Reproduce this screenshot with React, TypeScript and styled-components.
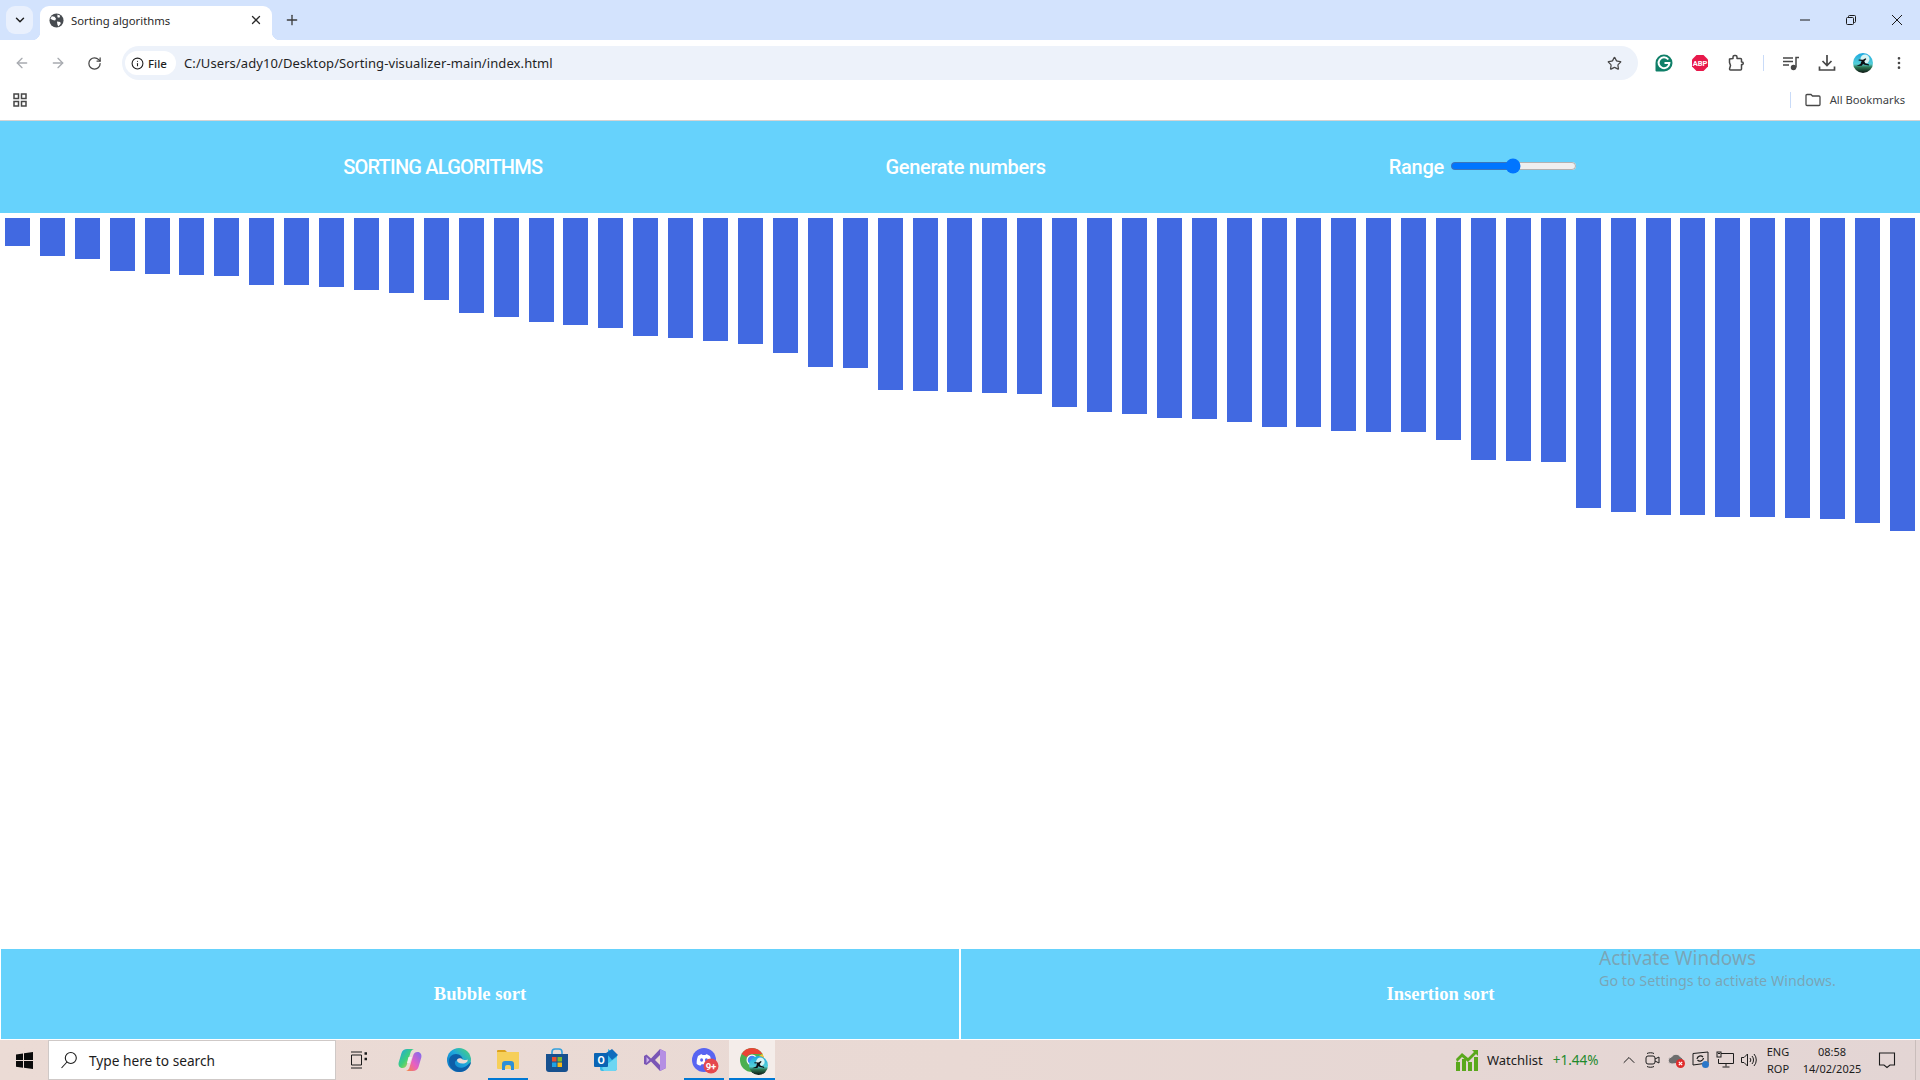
import React from 'react';
import styled, { createGlobalStyle } from 'styled-components';
import { ArrowLeft, ArrowRight, ChevronDown, ChevronUp, Info, MoreVertical, Plus, RotateCw, Star, X } from 'lucide-react';

const barHeights = [
  28, 38, 41, 53, 56, 57, 58, 67, 67, 69, 72, 75, 82, 95, 99, 104, 107, 110, 118, 120,
  123, 126, 135, 149, 150, 172, 173, 174, 175, 176, 189, 194, 196, 200, 201, 204, 209, 209,
  213, 214, 214, 222, 242, 243, 244, 290, 294, 297, 297, 299, 299, 300, 301, 305, 313,
];

const uiFont = '"Noto Sans", "Open Sans", sans-serif';

const GlobalStyle = createGlobalStyle`
  html, body {
    margin: 0;
    height: 100%;
    overflow: hidden;
    background: #fff;
  }
  #root {
    height: 100%;
  }
`;

const Page = styled.div`
  display: flex;
  flex-direction: column;
  height: 1080px;
  width: 1920px;
  position: relative;
`;

const TabStrip = styled.div`
  display: flex;
  align-items: flex-end;
  height: 40px;
  background: #d3e3fd;
  padding-left: 6px;
  flex-shrink: 0;
`;

const TabSearch = styled.div`
  width: 27px;
  height: 28px;
  margin-bottom: 6px;
  border-radius: 9px;
  background: #e9f0fd;
  display: flex;
  align-items: center;
  justify-content: center;
  color: #1f1f1f;
`;

const Tab = styled.div`
  position: relative;
  width: 232px;
  height: 34px;
  margin-left: 7px;
  box-sizing: border-box;
  padding: 0 9px 6px 9px;
  background: #fff;
  border-radius: 9px 9px 0 0;
  display: flex;
  align-items: center;
  gap: 7px;
  font: 11.3px ${uiFont};
  color: #2a2a2a;

  &::before,
  &::after {
    content: '';
    position: absolute;
    bottom: 0;
    width: 8px;
    height: 8px;
  }
  &::before {
    left: -8px;
    background: radial-gradient(circle at 0 0, #d3e3fd 8px, #fff 8.5px);
  }
  &::after {
    right: -8px;
    background: radial-gradient(circle at 100% 0, #d3e3fd 8px, #fff 8.5px);
  }
`;

const TabTitle = styled.span`
  flex: 1;
`;

const NewTab = styled.div`
  display: flex;
  align-items: center;
  justify-content: center;
  width: 20px;
  height: 34px;
  box-sizing: border-box;
  padding-bottom: 6px;
  margin-left: 10px;
  color: #3c3c3c;
`;

const WindowControls = styled.div`
  display: flex;
  margin-left: auto;
  height: 40px;
  align-items: center;
`;

const WindowButton = styled.div`
  width: 46px;
  display: flex;
  align-items: center;
  justify-content: center;
  color: #1a1a1a;
`;

const Toolbar = styled.div`
  display: flex;
  align-items: center;
  height: 40px;
  background: #fff;
  border-radius: 10px 10px 0 0;
  flex-shrink: 0;
  padding-left: 4px;
`;

const NavButton = styled.div<{ $muted?: boolean }>`
  width: 36px;
  margin-top: 6px;
  display: flex;
  justify-content: center;
  color: ${(p) => (p.$muted ? '#a8abb0' : '#474747')};
`;

const AddressBar = styled.div`
  display: flex;
  align-items: center;
  width: 1516px;
  height: 34px;
  margin-left: 10px;
  margin-top: 6px;
  border-radius: 17px;
  background: #edf2fa;
  padding: 0 16px 0 3px;
  box-sizing: border-box;
`;

const FileChip = styled.div`
  display: flex;
  align-items: center;
  gap: 4px;
  height: 24px;
  width: 51px;
  padding-left: 6px;
  box-sizing: border-box;
  background: #fff;
  border-radius: 12px;
  font: 500 11.5px ${uiFont};
  color: #1f1f1f;
`;

const Url = styled.span`
  flex: 1;
  margin-left: 8px;
  font: 13px ${uiFont};
  letter-spacing: 0.09px;
  color: #1f1f1f;
`;

const ToolbarIcons = styled.div`
  display: flex;
  align-items: center;
  margin-left: 8px;
  margin-top: 6px;
`;

const ToolbarIcon = styled.div<{ $w?: number }>`
  width: ${(p) => p.$w ?? 36}px;
  display: flex;
  justify-content: center;
  color: #474747;
`;

const BarDivider = styled.div`
  width: 1px;
  height: 16px;
  background: #c9dbf8;
`;

const ToolbarDivider = styled(BarDivider)`
  margin-left: 9px;
`;

const BookmarksBar = styled.div`
  display: flex;
  align-items: center;
  height: 40px;
  padding: 0 15px 0 13px;
  background: #fff;
  border-bottom: 1px solid #d4d4d4;
  flex-shrink: 0;
  font: 11.2px ${uiFont};
  color: #3c4043;
`;

const AllBookmarks = styled.div`
  margin-left: auto;
  display: flex;
  align-items: center;
  gap: 14px;
`;

const BookmarkLabel = styled.span`
  margin-left: -5px;
  margin-top: -2px;
`;

const Header = styled.header`
  display: flex;
  align-items: center;
  justify-content: space-evenly;
  height: 92px;
  background: #66d2fc;
  color: #fff;
  flex-shrink: 0;
  font: 500 20px Roboto, sans-serif;
  letter-spacing: -0.3px;
`;

const HeaderTitle = styled.span`
  letter-spacing: -0.78px;
`;

const RangeGroup = styled.label`
  display: flex;
  align-items: center;
  gap: 4px;
`;

const RangeInput = styled.input`
  width: 127px;
  margin: 0 0 2px 2px;
  accent-color: #0075ff;
`;

const Bars = styled.main`
  flex: 1;
  display: flex;
  align-items: flex-start;
  justify-content: space-around;
  padding-top: 5px;
`;

const Bar = styled.div`
  width: 25px;
  background: #4169e1;
`;

const Footer = styled.footer`
  display: grid;
  grid-template-columns: 958px 1fr;
  gap: 2px;
  height: 90px;
  padding-left: 1px;
  margin-bottom: 1px;
  flex-shrink: 0;
`;

const SortButton = styled.button`
  border: none;
  background: #66d2fc;
  color: #fff;
  font: bold 18.6px "Liberation Serif", serif;
  padding: 0;
`;

const Watermark = styled.div`
  position: absolute;
  left: 1599px;
  top: 944px;
  font-family: ${uiFont};
  color: rgba(135, 135, 135, 0.6);
  pointer-events: none;
`;

const WatermarkTitle = styled.div`
  font-size: 19px;
  line-height: 28px;
`;

const WatermarkText = styled.div`
  font-size: 14.3px;
  line-height: 20px;
  margin-top: -1px;
`;

const Taskbar = styled.div`
  display: flex;
  align-items: stretch;
  height: 40px;
  flex-shrink: 0;
  background: linear-gradient(90deg, #ebdbd5 0%, #e9d9d4 50%, #e3d5d4 100%);
  font-family: ${uiFont};
  color: #1c1c1c;
`;

const StartButton = styled.div`
  width: 48px;
  display: flex;
  align-items: center;
  justify-content: center;
`;

const SearchBox = styled.div`
  width: 288px;
  box-sizing: border-box;
  display: flex;
  align-items: center;
  gap: 11px;
  padding-left: 11px;
  background: #fff;
  border: 1px solid #cfc9c7;
  font-size: 13.7px;
`;

const TaskSlot = styled.div<{ $open?: boolean; $focused?: boolean }>`
  position: relative;
  width: ${(p) => (p.$focused ? 46 : 49)}px;
  margin-left: ${(p) => (p.$focused ? 1 : 0)}px;
  display: flex;
  align-items: center;
  justify-content: center;
  background: ${(p) => (p.$focused ? '#f4edea' : 'transparent')};

  &::after {
    content: ${(p) => (p.$open || p.$focused ? "''" : 'none')};
    position: absolute;
    bottom: 0;
    left: ${(p) => (p.$focused ? 0 : 5)}px;
    width: ${(p) => (p.$focused ? 46 : 40)}px;
    height: 2px;
    background: #0078d4;
  }
`;

const TaskViewSlot = styled(TaskSlot)`
  padding-right: 3px;
  box-sizing: border-box;
`;

const Tray = styled.div`
  margin-left: auto;
  display: flex;
  align-items: stretch;
`;

const Watchlist = styled.div`
  width: 161px;
  display: flex;
  align-items: center;
  font-size: 13px;
`;

const WatchlistLabel = styled.span`
  margin-left: 9px;
`;

const WatchlistValue = styled.span`
  margin-left: 10px;
  font-size: 13.5px;
  color: #1f8a2c;
`;

const TrayIcon = styled.div`
  width: 24px;
  display: flex;
  align-items: center;
  justify-content: center;
`;

const TrayText = styled.div<{ $w: number }>`
  width: ${(p) => p.$w}px;
  display: flex;
  flex-direction: column;
  align-items: center;
  justify-content: center;
  font-size: 11px;
  line-height: 17px;
  white-space: nowrap;
`;

const NotifyButton = styled.div`
  width: 36px;
  display: flex;
  align-items: center;
  justify-content: center;
`;

const ShowDesktop = styled.div`
  width: 15px;
  box-sizing: border-box;
  padding-left: 10px;

  &::before {
    content: '';
    display: block;
    width: 1px;
    height: 100%;
    background: #c9bdbb;
  }
`;

const Globe = () => (
  <svg width="15" height="15" viewBox="0 0 16 16">
    <circle cx="8" cy="8" r="7.500" fill="#474b50" />
    <path d="M3 3.500l3 .5 1.500 2-1 2-2.500-.5L1.500 6zM9 1.500l3 1.500-1 2-2-.5zM8.500 9l3.500.5.500 2-2.500 3-1-2z" fill="#fff" />
  </svg>
);

const AppsGrid = () => (
  <svg width="14" height="14" viewBox="0 0 14 14" fill="none" stroke="#474747" strokeWidth="1.500">
    <rect x="1" y="1" width="4.500" height="4.500" />
    <rect x="8.500" y="1" width="4.500" height="4.500" />
    <rect x="1" y="8.500" width="4.500" height="4.500" />
    <rect x="8.500" y="8.500" width="4.500" height="4.500" />
  </svg>
);

const Minimize = () => (
  <svg width="10" height="10" viewBox="0 0 10 10"><path d="M0 5h10" stroke="currentColor" /></svg>
);

const Restore = () => (
  <svg width="10" height="10" viewBox="0 0 10 10" fill="none" stroke="currentColor">
    <rect x=".5" y="2.500" width="7" height="7" rx="1" />
    <path d="M2.500 2.500v-1a1 1 0 0 1 1-1h5a1 1 0 0 1 1 1v5a1 1 0 0 1-1 1h-1" />
  </svg>
);

const CloseGlyph = () => (
  <svg width="10" height="10" viewBox="0 0 10 10"><path d="M0 0l10 10M10 0L0 10" stroke="currentColor" /></svg>
);

const Grammarly = () => (
  <svg width="18" height="18" viewBox="0 0 18 18">
    <path d="M9 .500a8.500 8.500 0 1 1 0 17H1.500a1 1 0 0 1-1-1V9A8.500 8.500 0 0 1 9 .500z" fill="#0f7f68" />
    <path d="M13.300 5.500A5.400 5.400 0 1 0 14.400 9H9.500" fill="none" stroke="#fff" strokeWidth="2" />
  </svg>
);

const AdblockPlus = () => (
  <svg width="18" height="18" viewBox="0 0 18 18">
    <path d="M5.500 1h7L17 5.500v7L12.500 17h-7L1 12.500v-7z" fill="#e8194b" />
    <text x="9" y="11.800" textAnchor="middle" fontFamily="Roboto, sans-serif" fontWeight="700" fontSize="7.500" fill="#fff">ABP</text>
  </svg>
);

const ExtensionPuzzle = () => (
  <svg width="18" height="18" viewBox="0 0 18 18" fill="none" stroke="#474747" strokeWidth="1.500" strokeLinejoin="round">
    <path d="M2.500 5l3.500-.5V3a1.500 1.500 0 0 1 1.500-1.500h1A1.500 1.500 0 0 1 10 3v1.500h3.500a1 1 0 0 1 1 1V8h.5a1 1 0 0 1 0 2.500h-.5V15a1 1 0 0 1-1 1H3.500a1 1 0 0 1-1-1l1-3.500-1-3z" />
  </svg>
);

const MediaQueue = () => (
  <svg width="18" height="18" viewBox="0 0 18 18" fill="none" stroke="#474747" strokeWidth="1.500">
    <path d="M1 4h10M1 7.500h10M1 11h6" />
    <path d="M14 13.500V3.500h3" />
    <circle cx="11.500" cy="13.500" r="2" fill="#474747" />
  </svg>
);

const DownloadTray = () => (
  <svg width="18" height="18" viewBox="0 0 18 18" fill="none" stroke="#474747" strokeWidth="1.700">
    <path d="M9 1v10M4.500 7L9 11.500 13.500 7" />
    <path d="M1.500 12.500V16h15v-3.500" />
  </svg>
);

const Avatar = ({ size = 20 }: { size?: number }) => (
  <svg width={size} height={size} viewBox="0 0 20 20">
    <defs>
      <linearGradient id="sky" x1="0" y1="0" x2="0" y2="1">
        <stop offset="0" stopColor="#1aa7e0" />
        <stop offset=".55" stopColor="#56d0d8" />
        <stop offset=".7" stopColor="#2e7a55" />
        <stop offset="1" stopColor="#0d1512" />
      </linearGradient>
    </defs>
    <circle cx="10" cy="10" r="10" fill="url(#sky)" />
    <circle cx="12" cy="6" r="4.500" fill="#d8f4f4" />
    <path d="M3.500 13l4-2 1-3-3-.5.300-1 4.200.3 2.500-1.500.8.800-2 2.200 1 2 3.500 1 .2 1.200-4.500-.8-1.500-.8-1.200 1.800z" fill="#0c0f12" />
  </svg>
);

const FolderOutline = () => (
  <svg width="16" height="14" viewBox="0 0 16 14" fill="none" stroke="#474747" strokeWidth="1.300">
    <path d="M1 2.500a1 1 0 0 1 1-1h4l1.500 1.500H14a1 1 0 0 1 1 1v7.500a1 1 0 0 1-1 1H2a1 1 0 0 1-1-1z" />
  </svg>
);

const WindowsLogo = () => (
  <svg width="17" height="17" viewBox="0 0 17 17" fill="#0a0a0a">
    <path d="M0 2.400l7-1v6.700H0zM8 1.300L17 0v8.100H8zM0 9h7v6.700l-7-1zM8 9h9v8l-9-1.300z" />
  </svg>
);

const SearchGlyph = () => (
  <svg width="18" height="18" viewBox="0 0 18 18" fill="none" stroke="#1c1c1c" strokeWidth="1.100">
    <circle cx="10.800" cy="7" r="5.500" />
    <path d="M7 11L1.500 17" />
  </svg>
);

const TaskView = () => (
  <svg width="18" height="18" viewBox="0 0 18 18" fill="none" stroke="#1c1c1c" strokeWidth="1">
    <path d="M1 1h11M1 17h11" />
    <path d="M1.500 4h10v10h-10z" />
    <path d="M14.500 2.500h2.500M14.500 8h2.500" strokeWidth="2.500" />
  </svg>
);

const Copilot = () => (
  <svg width="24" height="24" viewBox="0 0 24 24">
    <defs>
      <linearGradient id="copA" x1="0" y1="0" x2="1" y2="1">
        <stop offset="0" stopColor="#1fa5e6" />
        <stop offset=".5" stopColor="#3ccf7d" />
        <stop offset="1" stopColor="#f8d22f" />
      </linearGradient>
      <linearGradient id="copB" x1="1" y1="0" x2="0" y2="1">
        <stop offset="0" stopColor="#7a6cf0" />
        <stop offset=".55" stopColor="#e85fc2" />
        <stop offset="1" stopColor="#f58a3c" />
      </linearGradient>
    </defs>
    <path d="M9 1h7c-2 .5-3 2-3.600 4L9 16c-.7 2.500-2 4-4.500 4C1.500 20 0 17.500 .7 14.500L3.500 5C4.300 2.500 6.500 1 9 1z" fill="url(#copA)" />
    <path d="M15 23H8c2-.5 3-2 3.600-4L15 8c.7-2.500 2-4 4.500-4 3 0 4.500 2.500 3.800 5.500L20.500 19c-.8 2.500-3 4-5.500 4z" fill="url(#copB)" />
    <path d="M10.500 9h3.500l-2.500 6H9z" fill="#f7edf3" />
  </svg>
);

const Edge = () => (
  <svg width="24" height="24" viewBox="0 0 24 24">
    <defs>
      <linearGradient id="edgeA" x1="0" y1="1" x2="1" y2="0">
        <stop offset="0" stopColor="#0c6fc0" />
        <stop offset=".55" stopColor="#1ea7dd" />
        <stop offset="1" stopColor="#4fd86d" />
      </linearGradient>
    </defs>
    <circle cx="12" cy="12" r="12" fill="url(#edgeA)" />
    <path d="M24 14c-1 6-6 10-11 10-7 0-11-5-11-11 0-4 3-7 7-7 4 0 7 3 6.500 6H11c-2.500 0-3.500 2-3 4 .8 3 4.500 4.500 8 3.500 3-.8 5-3 8-5.500z" fill="#0d5ea8" />
    <path d="M14.500 10.500c1 1.500 4 2 6 1 .8 2-1.500 4-5 4-3.500 0-5.500-1.500-5.500-3.500 0-1 1.500-2.500 4.500-1.500z" fill="#ebdbd5" />
  </svg>
);

const FileExplorer = () => (
  <svg width="24" height="24" viewBox="0 0 24 24">
    <path d="M1 3a1 1 0 0 1 1-1h7l2 2h-10z" fill="#dca21e" />
    <path d="M1 4h22v16a1 1 0 0 1-1 1H2a1 1 0 0 1-1-1z" fill="#f6cf5a" />
    <path d="M6 22v-6a3 3 0 0 1 3-3h6a3 3 0 0 1 3 3v6h-3v-3a2 2 0 0 0-2-2h-2a2 2 0 0 0-2 2v3z" fill="#2c8fd8" />
  </svg>
);

const MicrosoftStore = () => (
  <svg width="24" height="24" viewBox="0 0 24 24">
    <path d="M7 7V4a3 3 0 0 1 3-3h4a3 3 0 0 1 3 3v3" fill="none" stroke="#35a0dc" strokeWidth="1.600" />
    <path d="M1 6h22v15a3 3 0 0 1-3 3H4a3 3 0 0 1-3-3z" fill="#17508e" />
    <rect x="7" y="9" width="4.500" height="4.500" fill="#e9502e" />
    <rect x="12.500" y="9" width="4.500" height="4.500" fill="#7fb92c" />
    <rect x="7" y="14.500" width="4.500" height="4.500" fill="#1fa2e4" />
    <rect x="12.500" y="14.500" width="4.500" height="4.500" fill="#f7b916" />
  </svg>
);

const Outlook = () => (
  <svg width="24" height="24" viewBox="0 0 24 24">
    <path d="M14 1l9 6v13a3 3 0 0 1-3 3H8a2 2 0 0 1-2-2v-3h8z" fill="#38bce8" />
    <path d="M12 5l6-4 6 6-6 5z" fill="#0f6cbd" />
    <path d="M8 20l8-6 7-5v11a3 3 0 0 1-3 3H10z" fill="#6dd6f3" />
    <rect x="0" y="5" width="14" height="14" rx="1" fill="#0a64b4" />
    <text x="7" y="16" textAnchor="middle" fontFamily="Roboto, sans-serif" fontWeight="700" fontSize="10.500" fill="#fff">O</text>
  </svg>
);

const VisualStudio = () => (
  <svg width="24" height="24" viewBox="0 0 24 24">
    <path d="M17 1l6 3v16l-6 3-9-9.500-4.500 3.500L1 16V8l2.500-1.500L8 10.500z" fill="#7a56b5" />
    <path d="M17 1l6 3v16l-6 3z" fill="#b58fe3" />
    <path d="M3.500 9l3 3-3 3z" fill="#cdb4ee" />
    <path d="M17 7v10l-5-5z" fill="#ebdbd5" />
  </svg>
);

const Discord = () => (
  <svg width="24" height="24" viewBox="0 0 24 24" overflow="visible">
    <circle cx="12" cy="12" r="12" fill="#5865f2" />
    <path d="M6 8c2-1.500 3.500-1.800 4-1.800l.4.800h3.200l.4-.8c.5 0 2 .3 4 1.800 1 2.500 1.500 5 1.300 8-1.500 1.100-3 1.500-3.800 1.600l-.8-1.300H9.500l-.8 1.300C7.900 17.500 6.300 17 4.700 16c-.2-3 .3-5.500 1.300-8z" fill="#fff" />
    <ellipse cx="9.600" cy="12" rx="1.500" ry="1.800" fill="#5865f2" />
    <ellipse cx="14.400" cy="12" rx="1.500" ry="1.800" fill="#5865f2" />
    <circle cx="19" cy="18" r="7.500" fill="#e5484d" />
    <text x="19" y="21.500" textAnchor="middle" fontFamily="Roboto, sans-serif" fontWeight="700" fontSize="9.500" fill="#fff">9+</text>
  </svg>
);

const ChromeWithProfile = () => (
  <svg width="24" height="24" viewBox="0 0 24 24" overflow="visible">
    <circle cx="12" cy="12" r="12" fill="#4caf50" />
    <path d="M12 0a12 12 0 0 1 10.400 6H12a6 6 0 0 0-5.200 3L1.600 6A12 12 0 0 1 12 0z" fill="#ea4335" />
    <path d="M22.400 6A12 12 0 0 1 12 24l5.200-9A6 6 0 0 0 17.200 9z" fill="#fbc02d" />
    <circle cx="12" cy="12" r="5.500" fill="#fff" />
    <circle cx="12" cy="12" r="4.300" fill="#4285f4" />
    <g transform="translate(9 8)"><Avatar size={19} /></g>
  </svg>
);

const WatchlistChart = () => (
  <svg width="22" height="22" viewBox="0 0 22 22" fill="#5aa81c">
    <rect x="0" y="13" width="4" height="9" />
    <rect x="6" y="10" width="4" height="12" />
    <rect x="12" y="13" width="4" height="9" />
    <rect x="18" y="8" width="4" height="14" />
    <path d="M0 10l6-6 6 5 6-6-2-2h6v6l-2-2-8 8-6-5-5 5z" />
  </svg>
);

const MeetNow = () => (
  <svg width="18" height="18" viewBox="0 0 18 18" fill="none" stroke="#1c1c1c" strokeWidth="1">
    <rect x="2" y="5" width="9" height="8" rx="2" />
    <path d="M11 8l4-2v6l-4-2M3 2.500c2-1 5-1 7 0M3 15.500c2 1 5 1 7 0" />
  </svg>
);

const CloudError = () => (
  <svg width="18" height="18" viewBox="0 0 18 18">
    <path d="M4 13a3.500 3.500 0 0 1-.5-7A5 5 0 0 1 12.500 6a3.500 3.500 0 0 1 1.500 6z" fill="#6e6e6e" stroke="#e3d5d4" />
    <circle cx="12.500" cy="12.500" r="4.500" fill="#e02b2b" />
    <path d="M10.800 10.800l3.400 3.400M14.200 10.800l-3.400 3.400" stroke="#fff" strokeWidth="1.200" />
  </svg>
);

const RemoteSync = () => (
  <svg width="18" height="18" viewBox="0 0 18 18" fill="none" stroke="#1c1c1c" strokeWidth="1">
    <path d="M1 2.500l15-1.500v11l-15 2z" />
    <path d="M5 8a3.500 3.500 0 0 1 6-2M11.500 7a3.500 3.500 0 0 1-6 2" strokeWidth="1.200" />
    <circle cx="13.500" cy="13.500" r="3.500" fill="#2b77c9" stroke="none" />
  </svg>
);

const NetworkPc = () => (
  <svg width="18" height="18" viewBox="0 0 18 18" fill="none" stroke="#1c1c1c" strokeWidth="1">
    <path d="M5 2.500h12.500v10H2.500V8" />
    <path d="M10 12.500v3M6.500 16h7" />
    <rect x="1" y="1" width="4" height="5" fill="#e3d5d4" />
    <rect x="2" y="2" width="2" height="1" fill="#1c1c1c" stroke="none" />
  </svg>
);

const Speaker = () => (
  <svg width="18" height="18" viewBox="0 0 18 18" fill="none" stroke="#1c1c1c" strokeWidth="1">
    <path d="M1.500 6.500h2.500l3.500-3.500v12l-3.500-3.500H1.500z" />
    <path d="M10 7a3 3 0 0 1 0 4M12 5a6 6 0 0 1 0 8M14 3a9 9 0 0 1 0 12" />
  </svg>
);

const ActionCenter = () => (
  <svg width="18" height="18" viewBox="0 0 18 18" fill="none" stroke="#1c1c1c" strokeWidth="1.100">
    <path d="M1.500 2h15v12H12l-3 2.500L6 14H1.500z" />
  </svg>
);

export default function App() {
  return (
    <Page>
      <GlobalStyle />

      <TabStrip>
        <TabSearch>
          <ChevronDown size={14} strokeWidth={2.5} />
        </TabSearch>
        <Tab>
          <Globe />
          <TabTitle>Sorting algorithms</TabTitle>
          <X size={14} strokeWidth={2.2} />
        </Tab>
        <NewTab>
          <Plus size={16} />
        </NewTab>
        <WindowControls>
          <WindowButton><Minimize /></WindowButton>
          <WindowButton><Restore /></WindowButton>
          <WindowButton><CloseGlyph /></WindowButton>
        </WindowControls>
      </TabStrip>

      <Toolbar>
        <NavButton $muted><ArrowLeft size={16} /></NavButton>
        <NavButton $muted><ArrowRight size={16} /></NavButton>
        <NavButton><RotateCw size={15} /></NavButton>
        <AddressBar>
          <FileChip>
            <Info size={13} color="#1f1f1f" />
            File
          </FileChip>
          <Url>C:/Users/ady10/Desktop/Sorting-visualizer-main/index.html</Url>
          <Star size={15} color="#474747" />
        </AddressBar>
        <ToolbarIcons>
          <ToolbarIcon $w={36}><Grammarly /></ToolbarIcon>
          <ToolbarIcon $w={36}><AdblockPlus /></ToolbarIcon>
          <ToolbarIcon $w={36}><ExtensionPuzzle /></ToolbarIcon>
          <ToolbarDivider />
          <ToolbarIcon $w={54}><MediaQueue /></ToolbarIcon>
          <ToolbarIcon $w={18}><DownloadTray /></ToolbarIcon>
          <ToolbarIcon $w={54}><Avatar /></ToolbarIcon>
          <ToolbarIcon $w={18}><MoreVertical size={16} /></ToolbarIcon>
        </ToolbarIcons>
      </Toolbar>

      <BookmarksBar>
        <AppsGrid />
        <AllBookmarks>
          <BarDivider />
          <FolderOutline />
          <BookmarkLabel>All Bookmarks</BookmarkLabel>
        </AllBookmarks>
      </BookmarksBar>

      <Header>
        <HeaderTitle>SORTING ALGORITHMS</HeaderTitle>
        <span>Generate numbers</span>
        <RangeGroup>
          Range
          <RangeInput type="range" min={0} max={100} defaultValue={50} />
        </RangeGroup>
      </Header>

      <Bars>
        {barHeights.map((h, i) => (
          <Bar key={i} style={{ height: h }} />
        ))}
      </Bars>

      <Footer>
        <SortButton>Bubble sort</SortButton>
        <SortButton>Insertion sort</SortButton>
      </Footer>

      <Watermark>
        <WatermarkTitle>Activate Windows</WatermarkTitle>
        <WatermarkText>Go to Settings to activate Windows.</WatermarkText>
      </Watermark>

      <Taskbar>
        <StartButton><WindowsLogo /></StartButton>
        <SearchBox>
          <SearchGlyph />
          Type here to search
        </SearchBox>
        <TaskViewSlot><TaskView /></TaskViewSlot>
        <TaskSlot><Copilot /></TaskSlot>
        <TaskSlot><Edge /></TaskSlot>
        <TaskSlot $open><FileExplorer /></TaskSlot>
        <TaskSlot><MicrosoftStore /></TaskSlot>
        <TaskSlot><Outlook /></TaskSlot>
        <TaskSlot><VisualStudio /></TaskSlot>
        <TaskSlot $open><Discord /></TaskSlot>
        <TaskSlot $focused><ChromeWithProfile /></TaskSlot>

        <Tray>
          <Watchlist>
            <WatchlistChart />
            <WatchlistLabel>Watchlist</WatchlistLabel>
            <WatchlistValue>+1.44%</WatchlistValue>
          </Watchlist>
          <TrayIcon><ChevronUp size={20} strokeWidth={1.2} /></TrayIcon>
          <TrayIcon><MeetNow /></TrayIcon>
          <TrayIcon><CloudError /></TrayIcon>
          <TrayIcon><RemoteSync /></TrayIcon>
          <TrayIcon><NetworkPc /></TrayIcon>
          <TrayIcon><Speaker /></TrayIcon>
          <TrayText $w={34}>
            <span>ENG</span>
            <span>ROP</span>
          </TrayText>
          <TrayText $w={74}>
            <span>08:58</span>
            <span>14/02/2025</span>
          </TrayText>
          <NotifyButton><ActionCenter /></NotifyButton>
          <ShowDesktop />
        </Tray>
      </Taskbar>
    </Page>
  );
}
